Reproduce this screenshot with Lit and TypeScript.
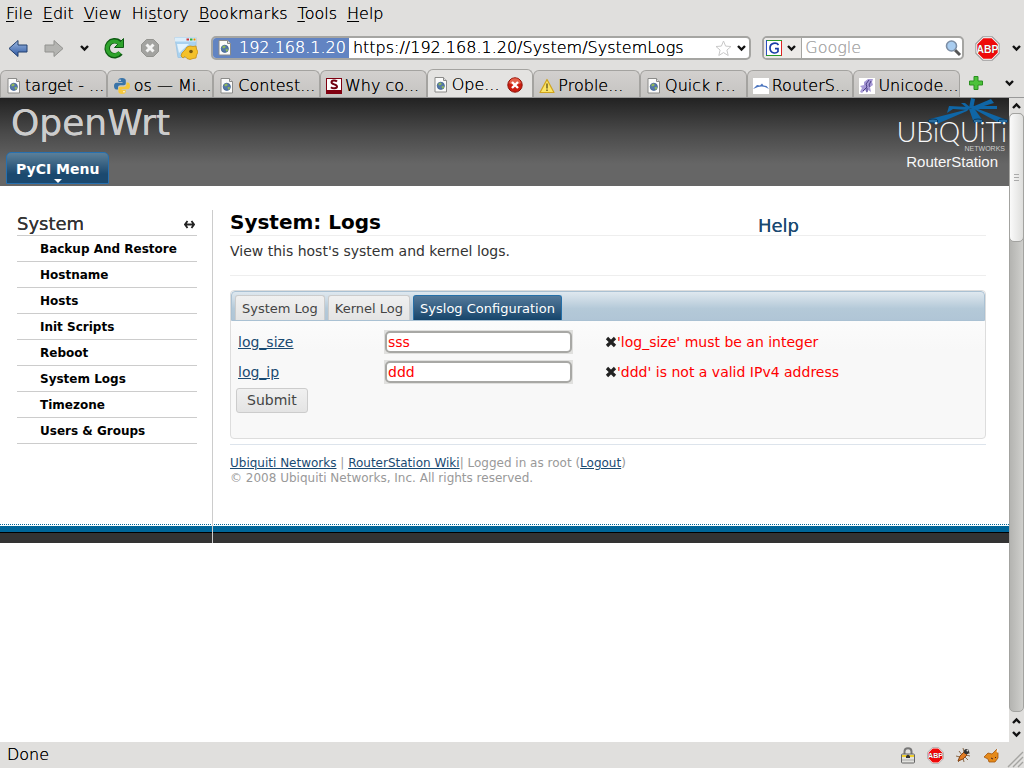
import { LitElement, html, css, svg } from "lit";
import { customElement, state } from "lit/decorators.js";
import { classMap } from "lit/directives/class-map.js";

const pageIcon = html`<svg width="16" height="18" viewBox="0 0 16 18" aria-hidden="true">
  <path d="M2 1.5h8.5l3 3V16H2z" fill="#fbfbfa" stroke="#8b8b89"/>
  <path d="M10.5 1.5v3h3" fill="#ddd" stroke="#8b8b89"/>
  <circle cx="7.8" cy="9.8" r="3.600" fill="#5478a8" stroke="#3c5f91" stroke-width=".8"/>
  <path d="M5 8l2-1.6 1.6.8-.4 1.6-1.8.8zM8.4 10.4l2.2-.6.4 1.6-1.4 1.6z" fill="#8fb85a"/>
</svg>`;

const chevron = html`<svg width="9" height="8" viewBox="0 0 9 8" aria-hidden="true">
  <path d="M1 2l3.500 3.500L8 2" fill="none" stroke="#111" stroke-width="2.400"/>
</svg>`;

const chevronUp = html`<svg width="9" height="8" viewBox="0 0 9 8" aria-hidden="true">
  <path d="M1 6l3.500-3.500L8 6" fill="none" stroke="#111" stroke-width="2.400"/>
</svg>`;

const pythonIcon = html`<svg width="18" height="18" viewBox="0 0 18 18" aria-hidden="true">
  <path d="M9 1C6 1 5.400 2 5.400 3.500V5H9.500v.8H3.600C1.800 5.800 1 7.200 1 9s.8 3.500 2.400 3.500H5V10.500C5 9 6 8.300 7.400 8.300h3.400c1.200 0 2-.8 2-2V3.500C12.800 2 11.500 1 9 1z" fill="#3a74a8"/>
  <circle cx="7" cy="3.200" r=".8" fill="#fff"/>
  <path d="M9 17c3 0 3.700-1 3.700-2.500V13H8.600v-.8h5.900c1.800 0 2.500-1.400 2.500-3.200S16.200 5.600 14.600 5.600H13.400v1.900c0 1.500-1 2.200-2.400 2.200H7.400c-1.200 0-2 .8-2 2v2.800C5.400 16 6.600 17 9 17z" fill="#f6c83c"/>
  <circle cx="11" cy="14.800" r=".8" fill="#fff"/>
</svg>`;

const sIcon = html`<svg width="16" height="16" viewBox="0 0 16 16" aria-hidden="true">
  <rect width="16" height="16" fill="#800010"/><rect x="1" y="1" width="14" height="11" fill="#fff"/>
  <path d="M11 3.500C9.500 2 5.500 2 5.500 4.300c0 2.400 5.500 1.700 5.500 4.200 0 2.400-4.500 2.300-6 .7" fill="none" stroke="#700010" stroke-width="2"/>
</svg>`;

const warnIcon = html`<svg width="16" height="16" viewBox="0 0 16 16" aria-hidden="true">
  <path d="M8 1.500L15 14.500H1z" fill="#fce566" stroke="#d0a41c" stroke-width="1.200" stroke-linejoin="round"/>
  <path d="M8 5.500v5M8 11.500v1.500" stroke="#4c3f10" stroke-width="1.200"/>
</svg>`;

const waveIcon = html`<svg width="16" height="16" viewBox="0 0 16 16" aria-hidden="true">
  <rect width="16" height="16" fill="#fff"/>
  <path d="M0 11l4-4 3 .6L9 5.500l1.500 2 3 .5L16 11l-4-2-3.500-.6L5 9z" fill="#4a74be"/>
</svg>`;

const uniIcon = html`<svg width="16" height="16" viewBox="0 0 16 16" aria-hidden="true">
  <rect width="16" height="16" fill="#fff"/>
  <path d="M1 14l2-4-2-2 4-1V4l4-3h5l-1 3 1 3-3 2 1 5-3-2-1 3-2-3-3 3z" fill="#a79ad6"/>
  <path d="M10 2L7 6l1 3-4 4M12 3l-2 4 1 2M8 10v4" stroke="#4b3f86" fill="none"/>
</svg>`;

const closeIcon = html`<svg width="16" height="16" viewBox="0 0 16 16" aria-hidden="true">
  <circle cx="8" cy="8" r="7.200" fill="#cc1d10" stroke="#8f1208"/>
  <path d="M2 6a6.200 6.200 0 0 1 12 0c-3 2-9 2-12 0z" fill="#e4624c"/>
  <path d="M5 5l6 6M11 5l-6 6" stroke="#fff" stroke-width="2.400"/>
</svg>`;

const abp = (size: number) => html`<svg width=${size} height=${size} viewBox="0 0 24 24" aria-hidden="true">
  <path d="M7.500.8h9l6.700 6.700v9l-6.700 6.700h-9L.8 16.500v-9z" fill="#fff" stroke="#9a9a9a"/>
  <path d="M8 2.200h8L21.800 8v8L16 21.800H8L2.200 16V8z" fill="#ee0a0a"/>
  <text x="12" y="16" text-anchor="middle" font-family="Liberation Sans, sans-serif" font-weight="700" font-size="10" fill="#fff">ABP</text>
</svg>`;

const crossMark = html`<svg width="12" height="12" viewBox="0 0 12 12" aria-hidden="true">
  <path d="M2 2l8 8M10 2l-8 8" stroke="#222" stroke-width="3.200"/>
</svg>`;

const logo = svg`
  <g fill="#0f66a6">
    <path d="M75 9l-4 4L41 26l-7-5 35-9z"/>
    <path d="M73 11l5-1 9 13-9 2z"/>
    <path d="M76 10l6 1 29 11-6 4z"/>
    <path d="M72 9l0 3-15-1-6 4 2-7z"/>
    <path d="M65 5l4 0 6 5-3 1z"/>
    <path d="M75 0l4 1-2 10-4-1z"/>
    <path d="M95 1l3 4-20 6-2-2z"/>
    <path d="M76 8l25 0 0 3-25 0z"/>
  </g>
  <g fill="#2b6ea0" stroke="#08395f">
    <ellipse cx="37" cy="23" rx="5" ry="2"/><ellipse cx="82" cy="23" rx="5" ry="2"/><ellipse cx="107" cy="23" rx="5" ry="2"/>
  </g>
  <g fill="#f8f8f8" text-anchor="end">
    <text x="111" y="44" font-family="Lato, sans-serif" font-weight="300" font-size="27">UBiQUiTi</text>
    <text x="109" y="53" font-family="Liberation Sans, sans-serif" font-size="7" fill="#ccc">NETWORKS</text>
    <text x="102" y="69" font-family="Liberation Sans, sans-serif" font-size="15">RouterStation</text>
  </g>`;

const TABS = [
  { label: "target - ...", icon: pageIcon },
  { label: "os — Mi...", icon: pythonIcon },
  { label: "Contest...", icon: pageIcon },
  { label: "Why co...", icon: sIcon },
  { label: "Ope...", icon: pageIcon, active: true },
  { label: "Proble...", icon: warnIcon },
  { label: "Quick r...", icon: pageIcon },
  { label: "RouterS...", icon: waveIcon },
  { label: "Unicode...", icon: uniIcon },
];

const MENUS = [["", "F", "ile"], ["", "E", "dit"], ["", "V", "iew"], ["Hi", "s", "tory"], ["", "B", "ookmarks"], ["", "T", "ools"], ["", "H", "elp"]];

@customElement("browser-chrome")
export class BrowserChrome extends LitElement {
  static styles = css`
    :host { display: block; background: #e0dfdd; color: #000; font: 200 16px/20px "DejaVu Sans", sans-serif; text-shadow: 0 0 currentColor; }
    button, input { font: inherit; color: inherit; text-shadow: inherit; border: 0; padding: 0; margin: 0; background: none; }
    svg { display: block; flex: none; }
    .menus { display: flex; padding: 4px 1px; }
    .menus button { padding: 0 5px; height: 19px; line-height: 19px; }
    .menus u { text-underline-offset: 2px; text-decoration-thickness: 1px; }
    .bar { display: flex; align-items: center; height: 42px; padding: 0 3px 0 7px; }
    .back { margin-right: 13px; }
    .fwd { margin-right: 16px; }
    .hist { margin-right: 14px; }
    .reload { margin-right: 15px; }
    .stop { margin-right: 14px; }
    .prefs { margin-right: 13px; }
    .field { display: flex; align-items: center; box-sizing: border-box; height: 24px; border: 2px solid #a5a5a2; border-radius: 5px; background: #fff; overflow: hidden; min-width: 0; }
    .field input { flex: 1; min-width: 0; outline: 0; }
    .url { flex: 542; margin-right: 11px; padding-right: 3px; }
    .ident { display: flex; align-items: center; height: 20px; gap: 6px; padding: 0 3px 0 4px; margin-right: 4px; background: #6284c2; color: #fff; }
    .star { margin-right: 5px; }
    .search { flex: 201; margin-right: 11px; }
    .engine { display: flex; align-items: center; gap: 5px; height: 20px; padding: 0 5px 0 2px; margin-right: 3px; background: #eceae8; border-right: 1px solid #a5a5a2; }
    .search input::placeholder { color: #aaa; opacity: 1; }
    .abp { margin-right: 12px; }
    .tabs { display: flex; align-items: flex-end; height: 29px; border-bottom: 1px solid #999; box-sizing: border-box; }
    .tab { flex: 1 1 0; min-width: 0; display: flex; align-items: center; gap: 3px; height: 27px; padding: 3px 0 0 5px; border: 1px solid #a4a3a0; border-bottom: 0; border-radius: 6px 6px 0 0; background: linear-gradient(#d2d0ce, #c5c4c1); white-space: nowrap; }
    .tab.active { height: 28px; padding-top: 2px; background: #e4e3e1; }
    .close { margin-left: auto; margin-right: 9px; }
    .end { flex: 0 0 64px; display: flex; align-items: center; justify-content: space-between; height: 28px; padding: 0 10px 0 8px; box-sizing: border-box; }
  `;

  render() {
    return html`
      <nav class="menus">${MENUS.map(([a, u, b]) => html`<button>${a}<u>${u}</u>${b}</button>`)}</nav>
      <div class="bar">
        <button class="back" aria-label="Back"><svg width="22" height="20" viewBox="0 0 22 20"><defs><linearGradient id="b" x2="0" y2="1"><stop stop-color="#9db9e2"/><stop offset="1" stop-color="#2c56a0"/></linearGradient></defs><path d="M2 10.500l9-8v4.500h9v7h-9v4.500z" fill="url(#b)" stroke="#23406e" stroke-linejoin="round"/></svg></button>
        <button class="fwd" aria-label="Forward"><svg width="22" height="20" viewBox="0 0 22 20"><path d="M21 10.500l-9-8v4.500H3v7h9v4.500z" fill="#b4b4b1" stroke="#92928f" stroke-linejoin="round"/></svg></button>
        <button class="hist" aria-label="History">${chevron}</button>
        <button class="reload" aria-label="Reload"><svg width="22" height="22" viewBox="0 0 22 22"><path d="M17.500 16a7.500 7.500 0 1 1-1-10.500" fill="none" stroke="#0d5c12" stroke-width="5.600"/><path d="M20.500 1.500v9h-9z" fill="#2fa32c" stroke="#0d5c12"/><path d="M16.800 15.500a7 7 0 1 1-.8-9.500l1 1.500" fill="none" stroke="#2fa32c" stroke-width="3.600"/></svg></button>
        <button class="stop" aria-label="Stop"><svg width="20" height="20" viewBox="0 0 20 20"><path d="M6.500 1.500h7l5 5v7l-5 5h-7l-5-5v-7z" fill="#a3a3a0" stroke="#93938f"/><path d="M6.500 6.500l7 7M13.500 6.500l-7 7" stroke="#f4f4f3" stroke-width="3"/></svg></button>
        <button class="prefs" aria-label="Preferences"><svg width="24" height="24" viewBox="0 0 24 24"><path d="M1 1.500h21v12l-8 8H4z" fill="#a9d2f0" stroke="#a3c8e4"/><path d="M1 1.500h21v4H1z" fill="#dceefa"/><path d="M3 8h12L5 17z" fill="#e4f3fd"/><path d="M12.500 3.500h2.500" stroke="#c33" stroke-width="2"/><path d="M16 3.500h2.500" stroke="#3a3" stroke-width="2"/><path d="M19.500 3.500h2" stroke="#e80" stroke-width="2"/><path d="M11 14l2-3 3-1 3 .5 3-.5.500 3 1.500 3-1.500 3-.500 3-3 .500-3 1-3-1-2-2-2 1.500-2-2 1-3z" fill="#f4c12a" stroke="#c98f10" stroke-width=".8"/><circle cx="17" cy="15.500" r="1.800" fill="#7a5a10"/></svg></button>
        <div class="field url">
          <span class="ident">${pageIcon}<span>192.168.1.20</span></span>
          <input aria-label="Address" value="https://192.168.1.20/System/SystemLogs" />
          <svg class="star" width="17" height="17" viewBox="0 0 17 17"><path d="M8.500 1l2.100 5.100 5.400.4-4.100 3.600 1.300 5.400-4.700-2.900-4.700 2.900 1.300-5.400L1 6.500l5.400-.4z" fill="#fff" stroke="#c8c8c8"/></svg>
          ${chevron}
        </div>
        <div class="field search">
          <button class="engine" aria-label="Search engine"><svg width="16" height="16" viewBox="0 0 16 16"><rect x=".5" y=".5" width="15" height="15" fill="#fff"/><path d="M0 .5h16" stroke="#2a9a2a"/><path d="M.5 0v16" stroke="#2a4fc0"/><path d="M15.500 1v15" stroke="#d22"/><path d="M0 15.500h15" stroke="#2a9a2a"/><path d="M12.500 5C10.500 2 4 2.500 4 8s6 6 8 3.500V8.700H9" fill="none" stroke="#1a3ea8" stroke-width="1.700"/></svg>${chevron}</button>
          <input aria-label="Search" placeholder="Google" />
          <svg width="18" height="18" viewBox="0 0 18 18"><path d="M11 11l5 5" stroke="#555" stroke-width="3"/><circle cx="7.500" cy="7" r="5" fill="#a9cdf0" stroke="#7d8fa6" stroke-width="1.600"/></svg>
        </div>
        <button class="abp" aria-label="Adblock Plus">${abp(25)}</button>
        <button aria-label="More">${chevron}</button>
      </div>
      <div class="tabs">
        ${TABS.map((t) => html`<button class=${classMap({ tab: true, active: !!t.active })}>${t.icon}<span>${t.label}</span>${t.active ? html`<span class="close">${closeIcon}</span>` : ""}</button>`)}
        <div class="end">
          <button aria-label="New tab"><svg width="16" height="16" viewBox="0 0 16 16"><path d="M6 1.500h4V6h4.500v4H10v4.500H6V10H1.500V6H6z" fill="#4cc23a" stroke="#2b9020"/></svg></button>
          <button aria-label="List tabs">${chevron}</button>
        </div>
      </div>`;
  }
}

@customElement("status-bar")
export class StatusBar extends LitElement {
  static styles = css`
    :host { display: flex; align-items: center; box-sizing: border-box; height: 26px; padding: 0 0 0 7px; background: #e0dfdd; color: #000; font: 200 16px/20px "DejaVu Sans", sans-serif; text-shadow: 0 0 currentColor; }
    .text { flex: 1; }
    .icons { display: flex; align-items: center; gap: 11px; }
    svg { display: block; }
    .grip { margin-left: 7px; align-self: flex-end; }
  `;
  render() {
    return html`<span class="text">Done</span>
      <div class="icons">
        <svg width="16" height="17" viewBox="0 0 16 17"><path d="M4.500 8V4.500C4.500 0 11.500 0 11.500 4.500V8" fill="none" stroke="#777" stroke-width="2"/><rect x="1.500" y="7" width="13" height="9" rx="1" fill="#e2e2de" stroke="#666"/><path d="M2 9h12" stroke="#f0cf2c" stroke-width="2"/><path d="M2 13h12" stroke="#aaa"/><path d="M6 9l2-1.500L10 9v2H6z" fill="#333"/></svg>
        ${abp(17)}
        <svg width="17" height="17" viewBox="0 0 17 17"><path d="M1 9l4 1M3 15l3-3M9 15l-1-4M4 4l3 4M8 1l1 4M15 9l-4-1M13 13l-3-3M15 6h-2" stroke="#8a6a4a"/><path d="M3 14l2-5 4-4 3 3-4 4z" fill="#e07c24" stroke="#8a4514"/><circle cx="11.500" cy="4.500" r="2.600" fill="#333"/><circle cx="12.500" cy="3.500" r="1" fill="#ddd"/></svg>
        <svg width="17" height="17" viewBox="0 0 17 17"><path d="M1 10l4-4 4 1 5-5 1 4 0 5-3 4H6l-1-3z" fill="#e58a1a" stroke="#a5560c" stroke-width=".8"/><path d="M14 2l1.500 0v4l-2-1z" fill="#eee"/><path d="M8 11l2 1M12 10l1 1" stroke="#422"/></svg>
      </div>
      <svg class="grip" width="17" height="17" viewBox="0 0 17 17"><path d="M1 16L16 1M6 16L16 6M11 16l5-5" stroke="#a5a5a2" stroke-width="1.400"/></svg>`;
  }
}

@customElement("scroll-bar")
export class ScrollBar extends LitElement {
  static styles = css`
    :host { display: flex; flex-direction: column; align-items: center; width: 15px; background: #e0dfdd; }
    svg { display: block; }
    .up { padding: 4px 0 3px; }
    .trough { flex: 1; align-self: stretch; box-sizing: border-box; border: 1px solid #a3a3a0; border-radius: 5px; background: linear-gradient(90deg, #b4b4b1, #cfcfcc); }
    .thumb { box-sizing: border-box; height: 21.6%; margin: -1px; border: 1px solid #a3a3a0; border-radius: 5px; background: linear-gradient(90deg, #fafafa, #dededc); display: grid; align-content: center; justify-items: center; gap: 2px; }
    .thumb i { width: 5px; height: 1px; background: #aaa; }
    .down { display: grid; gap: 5px; padding: 5px 0 4px; }
  `;
  render() {
    return html`<div class="up">${chevronUp}</div>
      <div class="trough"><div class="thumb"><i></i><i></i><i></i></div></div>
      <div class="down">${chevronUp}${chevron}</div>`;
  }
}

@customElement("router-page")
export class RouterPage extends LitElement {
  @state() private tab = 2;

  static styles = css`
    :host { display: block; background: #fff; color: #333; font: 14px/20px "DejaVu Sans", sans-serif; }
    button, input { font: inherit; margin: 0; }
    a { color: #1a4a72; }
    svg { display: block; }
    header { display: flex; justify-content: space-between; height: 88px; background: linear-gradient(#222, #4a4a4a 40%, #666 75%, #666); }
    .brand { display: flex; flex-direction: column; justify-content: space-between; align-items: flex-start; padding: 4px 0 2px 6px; }
    h1 { margin: 0; padding-left: 5px; font-size: 36px; line-height: 42px; font-weight: 400; color: #ccc; text-shadow: 0 0 currentColor; }
    .menu { display: grid; justify-items: center; box-sizing: border-box; height: 32px; padding: 6px 9px 0; border: 1px solid #2670b0; border-radius: 5px 5px 0 0; background: linear-gradient(#5b7f99, #1b496f 70%); color: #fff; font-weight: 700; line-height: 20px; }
    .menu::after { content: ""; border: 4px solid transparent; border-top-color: #fff; border-bottom: 0; }
    .logo { margin-right: 1px; }
    .body { display: grid; grid-template-columns: 212px 1px 1fr; grid-template-rows: auto 19px; }
    .side { padding: 27px 15px 0 17px; }
    .side h2 { display: flex; justify-content: space-between; align-items: center; margin: 0; font-size: 18px; line-height: 22px; font-weight: 400; text-shadow: 0 0 currentColor; border-bottom: 1px solid #ccc; padding-right: 2px; }
    .side ul { list-style: none; margin: 0; padding: 0; }
    .side li { border-bottom: 1px solid #ccc; padding: 2px 0 0 23px; line-height: 23px; font-size: 12px; font-weight: 700; }
    .side li a { color: #000; text-decoration: none; }
    .rule { grid-row: 1 / 3; grid-column: 2; margin-top: 24px; background: #ccc; z-index: 1; }
    .band { grid-row: 2; grid-column: 1 / -1; background: repeating-linear-gradient(90deg, #069 0 1px, #fff 1px 2px) 0 0 / 100% 1px no-repeat, linear-gradient(#fff 0 2px, #069 2px 8px, #000 8px 9px, #333 9px); }
    main { padding: 24px 23px 38px 17px; min-width: 0; }
    .title { display: grid; grid-template-columns: 528px 1fr; align-items: end; border-bottom: 1px solid #eee; height: 25px; }
    .title h2 { margin: 0; font-size: 20px; line-height: 25px; color: #000; }
    .title a { font-size: 18px; line-height: 18px; text-decoration: none; text-shadow: 0 0 currentColor; }
    .desc { margin: 0; padding: 5px 0 14px; border-bottom: 1px solid #eee; }
    .panel { margin-top: 14px; border: 1px solid #ddd; border-radius: 4px; background: linear-gradient(#fff, #f8f8f8 40%); padding-bottom: 25px; }
    .tabs { display: flex; gap: 3px; box-sizing: border-box; height: 30px; padding: 3px 3px 0; border: 1px solid #aac1d3; border-radius: 4px 4px 0 0; background: linear-gradient(#dfe8ef, #b4c9d8 60%, #b0c5d6); font-size: 13px; }
    .tabs button { padding: 2px 6px 0; border: 1px solid #ccc; border-bottom: 0; border-radius: 3px 3px 0 0; background: linear-gradient(#f0f0f0, #e4e4e4); color: #444; line-height: 22px; }
    .tabs button.on { border-color: #2670a8; background: linear-gradient(#54799a, #16456b); color: #fff; }
    form { padding: 6px 5px 0; }
    .row { display: grid; grid-template-columns: 146px 221px 1fr; align-items: center; height: 30px; padding-left: 2px; }
    .row input { box-sizing: border-box; width: 187px; height: 22px; padding: 0 1px; border: 2px solid #a8a8a5; border-radius: 5px; color: #f00; background: #fff; }
    .box { display: flex; justify-self: start; padding: 1px; background: #e0e0de; }
    .err { display: flex; align-items: center; color: #f00; }
    .submit { display: block; height: 25px; margin-top: 1px; padding: 0 10px; border: 1px solid #ccc; border-radius: 3px; background: linear-gradient(#f0f0f0, #e4e4e4); color: #444; line-height: 23px; }
    footer { margin-top: 5px; padding-top: 11px; border-top: 1px solid #dde4ec; font-size: 12px; line-height: 15px; color: #999; }
    footer p { margin: 0; }
  `;

  render() {
    const items = ["Backup And Restore", "Hostname", "Hosts", "Init Scripts", "Reboot", "System Logs", "Timezone", "Users & Groups"];
    const tabs = ["System Log", "Kernel Log", "Syslog Configuration"];
    const fields = [
      { id: "log_size", value: "sss", error: "'log_size' must be an integer" },
      { id: "log_ip", value: "ddd", error: "'ddd' is not a valid IPv4 address" },
    ];
    return html`
      <header>
        <div class="brand"><h1>OpenWrt</h1><button class="menu">PyCI Menu</button></div>
        <svg class="logo" width="112" height="74" viewBox="0 0 112 74" role="img" aria-label="Ubiquiti Networks RouterStation">${logo}</svg>
      </header>
      <div class="body">
        <nav class="side">
          <h2>System<svg width="11" height="9" viewBox="0 0 11 9"><path d="M3.500 1L1 4.500 3.500 8M7.500 1L10 4.500 7.500 8M1 4.500h9" fill="none" stroke="#222" stroke-width="1.800"/></svg></h2>
          <ul>${items.map((i) => html`<li><a href="#">${i}</a></li>`)}</ul>
        </nav>
        <div class="rule"></div>
        <main>
          <div class="title"><h2>System: Logs</h2><a href="#">Help</a></div>
          <p class="desc">View this host's system and kernel logs.</p>
          <section class="panel">
            <div class="tabs">${tabs.map((t, i) => html`<button class=${classMap({ on: i === this.tab })} @click=${() => (this.tab = i)}>${t}</button>`)}</div>
            <form @submit=${(e: Event) => e.preventDefault()}>
              ${fields.map((f) => html`<div class="row">
                <label for=${f.id}><a href="#">${f.id}</a></label>
                <div class="box"><input id=${f.id} value=${f.value} /></div>
                <span class="err">${crossMark}<span>${f.error}</span></span>
              </div>`)}
              <button class="submit">Submit</button>
            </form>
          </section>
          <footer>
            <p><a href="#">Ubiquiti Networks</a> | <a href="#">RouterStation Wiki</a>| Logged in as root (<a href="#">Logout</a>)</p>
            <p>© 2008 Ubiquiti Networks, Inc. All rights reserved.</p>
          </footer>
        </main>
        <div class="band"></div>
      </div>`;
  }
}

@customElement("app-root")
export class AppRoot extends LitElement {
  static styles = css`
    :host { display: flex; flex-direction: column; min-height: 100vh; background: #fff; }
    .view { flex: 1; display: flex; }
    router-page { flex: 1; min-width: 0; }
  `;
  render() {
    return html`<browser-chrome></browser-chrome>
      <div class="view"><router-page></router-page><scroll-bar></scroll-bar></div>
      <status-bar></status-bar>`;
  }
}
